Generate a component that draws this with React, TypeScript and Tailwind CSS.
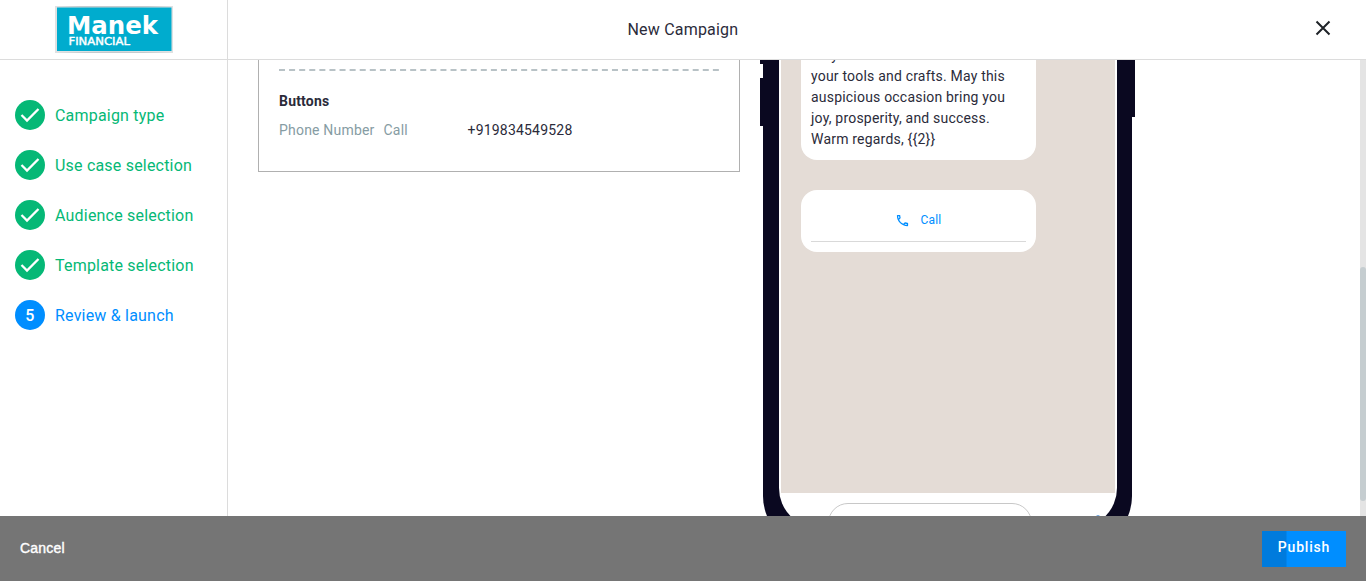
import React from "react";

const doneSteps = ["Campaign type", "Use case selection", "Audience selection", "Template selection"];

function Logo() {
  return (
    <svg width="118" height="47" viewBox="0 0 118 47" role="img" aria-label="Manek Financial">
      <rect x="0" y="0" width="118" height="47" fill="#dfe1e2" />
      <path d="M2 0h114q-57 3-114 0M2 47h114q-57-3-114 0" fill="#c4cbce" />
      <rect x="2" y="1.5" width="114.5" height="43.5" fill="#00acce" />
      <text x="12" y="27.5" fill="#fff" fontFamily="DejaVu Sans, sans-serif" fontWeight="700" fontSize="24.5" textLength="91" lengthAdjust="spacingAndGlyphs">Manek</text>
      <text x="13.5" y="39" fill="#fff" stroke="#fff" strokeWidth="0.4" fontFamily="DejaVu Sans, sans-serif" fontSize="10.2" textLength="61.5" lengthAdjust="spacingAndGlyphs">FINANCIAL</text>
    </svg>
  );
}

function Header() {
  return (
    <header className="flex h-[60px] shrink-0 border-b border-[#dcdcdc]">
      <div className="flex w-[228px] shrink-0 justify-center border-r border-[#dcdcdc] pt-1.5">
        <Logo />
      </div>
      <h1 className="flex-1 pt-[18px] pl-[399.5px] text-base font-normal tracking-[0.2px] text-[#2b2b3a]">
        New Campaign
      </h1>
      <button className="mt-[17px] mr-8 h-[22px] w-[22px] shrink-0" aria-label="Close">
        <svg width="22" height="22" viewBox="0 0 22 22" fill="none" stroke="#1f2328" strokeWidth="2">
          <path d="M4.5 4.5l13 13M17.5 4.5l-13 13" />
        </svg>
      </button>
    </header>
  );
}

function Sidebar() {
  return (
    <nav className="flex w-[228px] shrink-0 flex-col gap-5 border-r border-[#dcdcdc] pt-10 pl-[15px] text-base">
      {doneSteps.map((step) => (
        <div key={step} className="flex h-[30px] items-center gap-2.5 text-[#05b876]">
          <span className="h-[30px] w-[30px] rounded-full bg-[#05b876]">
            <svg width="30" height="30" viewBox="0 0 30 30" fill="none" stroke="#fff" strokeWidth="2.3">
              <path d="M6.5 15l5.5 5.5L23.5 9" />
            </svg>
          </span>
          <span className="pt-0.5">{step}</span>
        </div>
      ))}
      <div className="flex h-[30px] items-center gap-2.5 text-[#008eff]">
        <span className="flex h-[30px] w-[30px] items-center justify-center rounded-full bg-[#008eff] pt-px font-medium text-white">5</span>
        <span className="pt-0.5">Review &amp; launch</span>
      </div>
    </nav>
  );
}

function Summary() {
  return (
    <section className="h-[112px] w-[482px] shrink-0 border border-t-0 border-[#b0b0b0] px-5 pt-[9px] text-sm">
      <svg className="block" width="440" height="2">
        <path d="M0 1h440" stroke="#b8c2c6" strokeWidth="2" strokeDasharray="6 4.09" />
      </svg>
      <h2 className="mt-5 leading-5 font-bold text-[#2b2b3a]">Buttons</h2>
      <div className="mt-[9px] flex leading-5 text-[#869ca3]">
        <span className="w-[104.5px]">Phone Number</span>
        <span className="w-[84px]">Call</span>
        <span className="text-[#2b2b3a]">+919834549528</span>
      </div>
    </section>
  );
}

function Phone() {
  return (
    <div className="ml-5 flex h-[488px] shrink-0">
      <div className="w-[3px]">
        <div className="h-1 bg-[#0a0820]" />
        <div className="mt-[14px] h-12 bg-[#0a0820]" />
      </div>
      <div className="w-[369px] rounded-b-[52px] bg-[#0a0820] pr-[15px] pb-5 pl-4">
        <div className="h-[468px] overflow-hidden rounded-b-[40px] bg-white pr-0.5 pl-0.5">
          <div className="flow-root h-[433px] bg-[#e4dcd6] pl-5">
            <p className="-mt-[15px] h-[115px] w-[235px] rounded-b-[16px] bg-white px-2.5 text-sm leading-[21px] text-[#2b2b3a]">
              May Lord Vishwakarma bless<br />
              your tools and crafts. May this<br />
              auspicious occasion bring you<br />
              joy, prosperity, and success.<br />
              Warm regards, {"{{2}}"}
            </p>
            <div className="mt-[30px] h-[62px] w-[235px] rounded-[16px] bg-white px-2.5 pt-5">
              <div className="flex h-8 justify-center border-b border-[#d9d9d9] text-xs text-[#008eff]">
                <svg className="mt-[3px] mr-[11px] -ml-px" width="15" height="15" viewBox="0 0 24 24" fill="currentColor">
                  <path d="M6.54 5c.06.89.21 1.76.45 2.59l-1.2 1.2c-.41-1.2-.67-2.47-.76-3.79h1.51m9.86 12.02c.85.24 1.72.39 2.6.45v1.49c-1.32-.09-2.59-.35-3.8-.75l1.2-1.19M7.5 3H4c-.55 0-1 .45-1 1 0 9.39 7.61 17 17 17 .55 0 1-.45 1-1v-3.49c0-.55-.45-1-1-1-1.24 0-2.45-.2-3.57-.57-.1-.04-.21-.05-.31-.05-.26 0-.51.1-.71.29l-2.2 2.2c-2.83-1.45-5.15-3.76-6.59-6.59l2.2-2.2c.28-.28.36-.67.25-1.02C8.7 6.45 8.5 5.25 8.5 4c0-.55-.45-1-1-1z" />
                </svg>
                <span className="leading-5">Call</span>
              </div>
            </div>
          </div>
          <div className="flex pt-2.5 pl-[47px]">
            <div className="h-10 w-[204px] shrink-0 rounded-[20px] border border-[#c8c8c8]" />
            <div className="mt-3 ml-[64px] h-3 w-1 rounded-full bg-[#6ea3dc]" />
          </div>
        </div>
      </div>
      <div className="h-[57px] w-[3px] bg-[#0a0820]" />
    </div>
  );
}

export default function App() {
  return (
    <div className="flex h-[581px] w-[1366px] flex-col overflow-hidden bg-white font-[Roboto,sans-serif]">
      <Header />
      <div className="flex h-[456px] shrink-0 overflow-hidden tracking-[0.2px]">
        <Sidebar />
        <main className="flex flex-1 items-start pl-[30px]">
          <Summary />
          <Phone />
        </main>
        <div className="w-1.5 bg-[#e4e4e4] pt-[207px]">
          <div className="h-[234px] rounded-[3px] bg-[#c5cdd0]" />
        </div>
      </div>
      <footer className="flex h-[65px] shrink-0 items-start justify-between bg-[#757575] pr-5 pl-5">
        <button className="mt-[22px] font-['Liberation_Sans',sans-serif] text-sm leading-5 tracking-[0.2px] text-white [-webkit-text-stroke:0.4px_white]">Cancel</button>
        <button className="mt-[15px] h-9 w-[84px] bg-linear-to-r from-[#007bdd] from-[24px] to-[#008eff] to-[25px] pb-1 text-sm font-medium tracking-[0.8px] text-white">
          Publish
        </button>
      </footer>
    </div>
  );
}
